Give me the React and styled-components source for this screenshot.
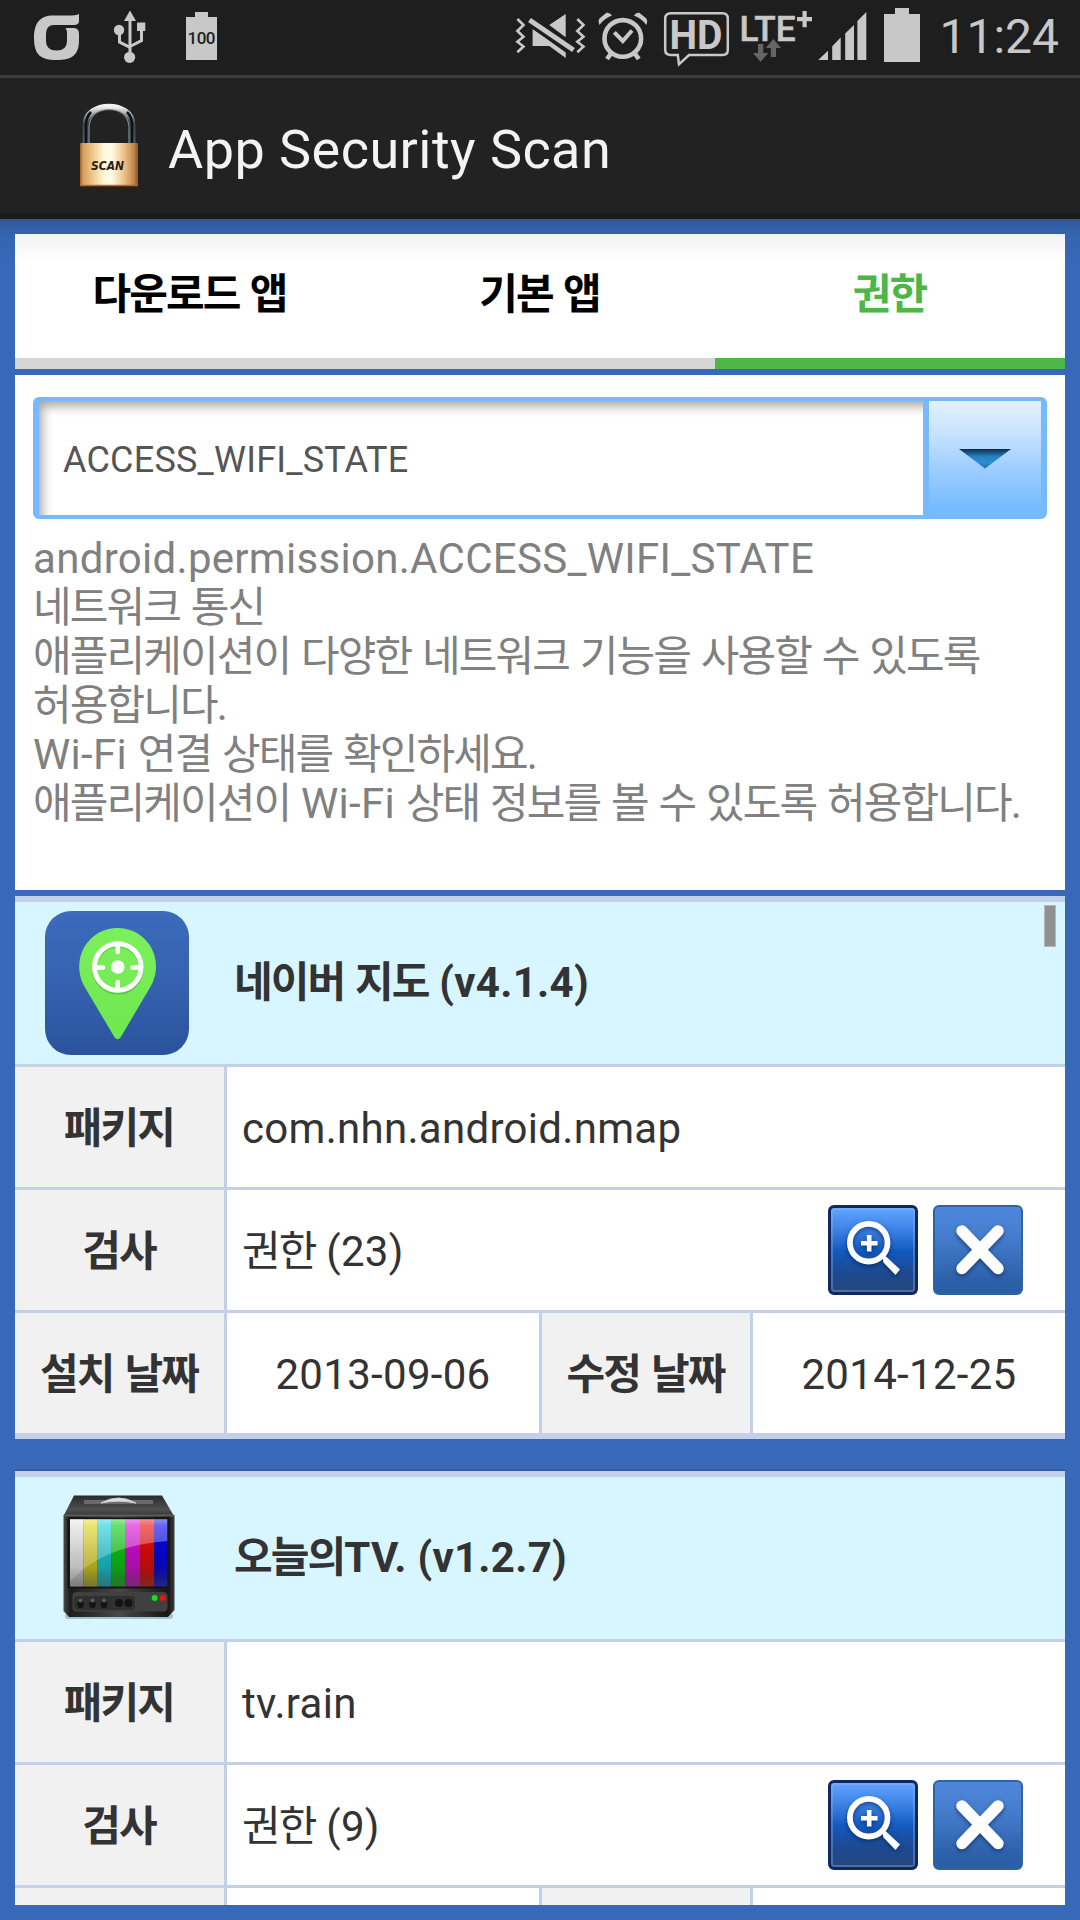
import React from "react";
import styled, { createGlobalStyle, css } from "styled-components";

const GlobalStyle = createGlobalStyle`
  * { box-sizing: border-box; }
  body { margin: 0; background: #3769b8; }
`;

const LATIN = `Roboto, "Noto Sans CJK KR", sans-serif`;
const HANGUL = `"Noto Sans CJK KR", Roboto, sans-serif`;
const ICON = "#c8c8c8";

const Screen = styled.div`
  width: 1080px;
  height: 1920px;
  overflow: hidden;
  display: flex;
  flex-direction: column;
  background: #3769b8;
  font-family: ${LATIN};
  font-size: 42px;
  line-height: 49px;
  letter-spacing: 0.3px;
  color: #333;
  white-space: nowrap;
`;

const Hangul = styled.span`
  font-family: ${HANGUL};
  letter-spacing: -0.045em;
  line-height: 0;
`;

/* Hangul runs get their own family and tracking; everything else stays in Roboto. */
function Label({ children }) {
  return (
    <span>
      {children
        .split(/([\uac00-\ud7a3]+)/)
        .filter(Boolean)
        .map((part, i) =>
          /[\uac00-\ud7a3]/.test(part) ? <Hangul key={i}>{part}</Hangul> : <React.Fragment key={i}>{part}</React.Fragment>
        )}
    </span>
  );
}

/* ---------- status bar ---------- */

const StatusBar = styled.header`
  flex: none;
  height: 78px;
  padding: 0 21px 0 30px;
  display: flex;
  background: #1e1e1e;
  border-bottom: 3px solid #3c3c3c;
  letter-spacing: 0;
`;

const StatusGlyph = styled.svg`
  flex: none;
  display: block;
  height: 75px;
  margin-left: ${(p) => p.$gap || 0}px;
  font-family: Roboto, sans-serif;
  font-weight: 700;
`;

const Clock = styled.time`
  margin-left: auto;
  font-size: 48px;
  line-height: 73px;
  color: ${ICON};
`;

function Glyph({ x, w, gap, children }) {
  return (
    <StatusGlyph $gap={gap} width={w} height="75" viewBox={`${x} 0 ${w} 75`} fill={ICON} stroke="none">
      {children}
    </StatusGlyph>
  );
}

function StatusIcons() {
  return (
    <>
      <Glyph x={30} w={52}>
        <path d="M79 14V21Q79 25 74 25H54Q46 25 46 34V41Q46 50.5 56.5 50.5T67 41V34Q67 30 65.5 28H74Q79 28 79 34V40C79 55 72 60 56.5 60S34 55 34 38C34 22 41 15.5 53 15.5H68Q76 15.5 79 14Z" />
      </Glyph>
      <Glyph x={110} w={40} gap={28}>
        <path d="M130 10.5L136 21H124Z" />
        <path d="M137 22.5h8.3v8.5h-8.3z" />
        <circle cx="119" cy="30" r="5.2" />
        <circle cx="129.6" cy="57.3" r="5.6" />
        <path d="M130 20V54M119.5 32V42L130 47.3M141.5 30V40.5L130 46.5" fill="none" stroke={ICON} strokeWidth="3" />
      </Glyph>
      <Glyph x={182} w={40} gap={32}>
        <path d="M186 17h9v-5h13v5h9v43h-31z" />
        <text x="187.5" y="44" fontSize="17" fontWeight="500" textLength="28" fill="#1e1e1e">100</text>
      </Glyph>
      <Glyph x={514} w={74} gap={292}>
        <path
          d="M517.4 19L523.5 25L517.4 31L523.5 36.7L517.4 41.7L523.5 46.5L517.4 52.3M577.3 19L583.5 25L577.3 31L583.5 36.7L577.3 41.7L583.5 46.5L577.3 52.3"
          fill="none"
          stroke={ICON}
          strokeWidth="2.6"
        />
        <path d="M549.2 25L565.7 14V37.3Z" />
        <path d="M532.6 29L565.7 51.5V58L549.2 46H532.6Z" />
        <path d="M527.500 22.500L571.500 54" fill="none" stroke="#1e1e1e" strokeWidth="4" />
        <path d="M529.5 20L573.5 50" fill="none" stroke={ICON} strokeWidth="5" />
      </Glyph>
      <Glyph x={596} w={54} gap={8}>
        <circle cx="622.8" cy="38.4" r="18.3" fill="none" stroke={ICON} strokeWidth="4.6" />
        <path d="M614.3 32.3L622.8 41L632 30.5" fill="none" stroke={ICON} strokeWidth="4" />
        <path d="M599.500 25Q597.500 20 600 18L606.500 12.800Q609.500 12 612 15.500Q604 18.500 599.500 25ZM646.300 25Q648.300 20 645.800 18L639.300 12.800Q636.300 12 633.800 15.500Q641.800 18.500 646.300 25Z" />
        <path d="M611 53.5L607 59M634.8 53.5L638.8 59" fill="none" stroke={ICON} strokeWidth="4.6" />
      </Glyph>
      <Glyph x={662} w={69} gap={12}>
        <path
          d="M671 13.2H722.5Q727.8 13.2 727.8 18.5V50Q727.8 55 722.5 55H689L679 64.3L677.8 55H671Q665.2 55 665.2 50V18.5Q665.2 13.2 671 13.2Z"
          fill="none"
          stroke={ICON}
          strokeWidth="2.5"
        />
        <text x="669.5" y="48.8" fontSize="40" textLength="53" lengthAdjust="spacingAndGlyphs">HD</text>
      </Glyph>
      <Glyph x={738} w={76} gap={7}>
        <text x="739.5" y="40.7" fontSize="34.5" fontWeight="500" textLength="56" lengthAdjust="spacingAndGlyphs" stroke={ICON} strokeWidth=".5">
          LTE
        </text>
        <path d="M802.5 11h4.2v6h5.3v4.2h-5.3v6h-4.2v-6h-5.5v-4.2h5.5z" />
        <path
          d="M758 44h5.3v9h4.9L760.6 62L753 53h5zM773.4 39l7.6 9h-5v9h-5.2v-9h-5z"
          fill="#656565"
          stroke="#1e1e1e"
          strokeWidth="1"
          paintOrder="stroke"
        />
      </Glyph>
      <Glyph x={816} w={52} gap={2}>
        <path d="M818.2 60L828 50.7V60ZM832.2 60V46.3L840.7 37.5V60ZM845.2 60V33.5L854 25V60ZM857.4 60V21L866.3 12V60Z" />
      </Glyph>
      <Glyph x={882} w={40} gap={14}>
        <path d="M884 14h11V8h14v6h11v48h-36z" />
      </Glyph>
    </>
  );
}

/* ---------- title bar ---------- */

const TitleBar = styled.div`
  flex: none;
  height: 141px;
  padding: 8px 0 0 69px;
  display: flex;
  align-items: center;
  gap: 18px;
  background: #222;
  border-bottom: 6px solid #1b1b1b;
`;

const AppTitle = styled.h1`
  margin: 0;
  font-size: 54px;
  font-weight: 400;
  line-height: 64px;
  letter-spacing: 0.45px;
  color: #f3f3f3;
`;

const Padlock = styled.svg`
  display: block;
  flex: none;
  margin-top: -10px;
`;

function PadlockIcon() {
  return (
    <Padlock width="81" height="96" viewBox="69 97 81 96">
      <defs>
        <linearGradient id="brass">
          <stop offset="0" stopColor="#a3672f" />
          <stop offset=".06" stopColor="#d8a062" />
          <stop offset=".25" stopColor="#f3cf96" />
          <stop offset=".42" stopColor="#fff8dc" />
          <stop offset=".55" stopColor="#fffbe6" />
          <stop offset=".75" stopColor="#efc58a" />
          <stop offset=".92" stopColor="#c58a4d" />
          <stop offset="1" stopColor="#8d5526" />
        </linearGradient>
        <linearGradient id="steel" x1="0" y1="0" x2="0" y2="1">
          <stop offset="0" stopColor="#f2f2f2" />
          <stop offset=".2" stopColor="#a0a4a7" />
          <stop offset=".45" stopColor="#3c4145" />
          <stop offset="1" stopColor="#50585f" />
        </linearGradient>
      </defs>
      <ellipse cx="109" cy="187" rx="38" ry="3" fill="#2c1f1a" />
      <path d="M85.500 144V125C85.500 100.500 132.500 100.500 132.500 125V144" fill="none" stroke="url(#steel)" strokeWidth="6" />
      <path d="M86 144V125Q86 117 91 112M132 144V125Q132 117 127 112" fill="none" stroke="#0c1117" strokeWidth="2.500" />
      <path d="M89 144V126Q91 110 109 109.500Q127 110 129 126V144" fill="none" stroke="#7f8b95" strokeWidth="1.200" />
      <rect x="80" y="143" width="58" height="43" rx="1" fill="url(#brass)" />
      <path d="M80 185.500H138" stroke="#a86f35" strokeWidth="1.500" />
      <text
        x="91"
        y="169.700"
        fontFamily="DejaVu Sans, sans-serif"
        fontSize="12"
        fontWeight="700"
        fontStyle="italic"
        textLength="33"
        lengthAdjust="spacingAndGlyphs"
        letterSpacing="0"
        fill="#2b1d10"
      >
        SCAN
      </text>
    </Padlock>
  );
}

/* ---------- content ---------- */

const Content = styled.main`
  position: relative;
  flex: 1;
  min-height: 0;
  padding: 15px;
  display: flex;
  flex-direction: column;
  gap: 6px;

  &::before {
    content: "";
    position: absolute;
    z-index: 1;
    top: 0;
    left: 0;
    right: 0;
    height: 42px;
    background: linear-gradient(rgba(0, 0, 0, 0.16), rgba(0, 0, 0, 0.05) 36%, rgba(0, 0, 0, 0));
    pointer-events: none;
  }
`;

const Tabs = styled.nav`
  flex: none;
  height: 135px;
  display: grid;
  grid-template-columns: repeat(3, 1fr);
  background: #fff;
`;

const Tab = styled.button`
  padding: 0 1px 3px 0;
  border: 0;
  border-bottom: 11px solid ${(p) => (p.$active ? "#4cb748" : "#d6d6d6")};
  background: none;
  font: 700 42px/49px ${LATIN};
  color: ${(p) => (p.$active ? "#4cb748" : "#000")};
`;

const PermissionPanel = styled.section`
  flex: none;
  height: 515px;
  padding: 22px 18px 0;
  background: #fff;
`;

const Select = styled.div`
  height: 122px;
  display: flex;
  border: 4px solid #75baff;
  border-width: 4px 6px 4px 6px;
  border-radius: 6px;
`;

const SelectValue = styled.div`
  flex: 1;
  padding: 4px 0 0 24px;
  display: flex;
  align-items: center;
  font-size: 36px;
  letter-spacing: 0.2px;
  color: #555;
  box-shadow: inset 7px 9px 11px -4px rgba(0, 0, 0, 0.36);
`;

const SelectArrow = styled.div`
  width: 118px;
  display: flex;
  align-items: center;
  justify-content: center;
  padding-top: 2px;
  border-left: 6px solid #75baff;
  background: linear-gradient(#e3f1ff, #c8e3fd 28%, #9dcdff 60%, #75baff 95%);
`;

const Description = styled.p`
  margin: 15px 0 0;
  color: #808080;
`;

const AppList = styled.section`
  position: relative;
  flex: 1;
  min-height: 0;
  overflow: hidden;
`;

const ScrollThumb = styled.div`
  position: absolute;
  top: 9px;
  right: 9px;
  width: 12px;
  height: 42px;
  background: #909090;
  border: 1px solid #b0b8ba;
`;

const Card = styled.article`
  height: 543px;
  margin-bottom: 32px;
  border: solid #c4d0e8;
  border-width: 6px 0;
  background: #fff;
  box-shadow: 0 -2px 0 ${(p) => (p.$edge ? "#305ca3" : "transparent")};
`;

const CardHeader = styled.div`
  height: 162px;
  padding-left: 30px;
  display: flex;
  align-items: center;
  gap: 45px;
  background: #d8f6ff;
`;

const AppName = styled.h2`
  margin: -2px 0 0;
  font-size: 42px;
  line-height: 49px;
  font-weight: 700;
`;

const Row = styled.div`
  height: 123px;
  display: grid;
  grid-template-columns: ${(p) => (p.$dates ? "209px 315px 211px 1fr" : "209px 1fr")};
  border-top: 3px solid #c4d0e8;
`;

const cell = css`
  display: flex;
  align-items: center;
  padding-top: 3px;
`;

const Term = styled.div`
  ${cell}
  justify-content: center;
  padding: 2px 1px 0 0;
  background: #f1f1f1;
  font-weight: 700;
  ${(p) => p.$divided && "border-left: 3px solid #c4d0e8;"}
`;

const Value = styled.div`
  ${cell}
  padding-left: ${(p) => (p.$centered ? 0 : 15)}px;
  justify-content: ${(p) => (p.$centered ? "center" : "space-between")};
  border-left: 3px solid #c4d0e8;
`;

const Actions = styled.div`
  display: flex;
  gap: 15px;
  margin: -3px 42px 0 0;
`;

const ActionButton = styled.button`
  width: 90px;
  height: 90px;
  padding: 0;
  border: ${(p) => (p.$primary ? "3px solid #10285f" : "2px solid #2f64a3")};
  border-radius: 6px;
  background: ${(p) =>
    p.$primary
      ? "linear-gradient(#62a3ff, #4188ea 22%, #1259bd 52%, #1c4b93 75%, #27457a)"
      : "linear-gradient(#4e86dc, #477fd0 30%, #2a5ea6 90%)"};
  box-shadow: ${(p) => (p.$primary ? "inset 0 0 0 2px rgba(150, 185, 235, 0.35)" : "none")};

  svg {
    display: block;
    margin: ${(p) => (p.$primary ? -3 : -2)}px;
    filter: drop-shadow(0 2px 2px rgba(0, 20, 70, 0.55));
  }
`;

function ZoomIcon() {
  return (
    <svg width="90" height="90" viewBox="0 0 90 90" fill="none" stroke="#fff">
      <circle cx="40.700" cy="37.700" r="18.800" strokeWidth="5.800" />
      <path d="M33 38.200H49.600M41.200 29.900V46.500" strokeWidth="4.600" />
      <path d="M54.500 53L57.500 51L72 64.500L67.500 70L55.500 57.500Z" fill="#fff" stroke="none" />
    </svg>
  );
}

function CloseIcon() {
  return (
    <svg width="90" height="90" viewBox="0 0 90 90" fill="none" stroke="#fff" strokeWidth="11.500" strokeLinecap="round">
      <path d="M29 26L65 63.500M65 26L29 63.500" />
    </svg>
  );
}

function MapIcon() {
  return (
    <svg width="144" height="144" viewBox="0 0 144 144">
      <defs>
        <linearGradient id="mapBg" x1="0" y1="0" x2="0" y2="1">
          <stop offset="0" stopColor="#3b6bba" />
          <stop offset=".5" stopColor="#3561b0" />
          <stop offset="1" stopColor="#2a539b" />
        </linearGradient>
        <linearGradient id="pin" x1="0" y1="0" x2="0" y2="1">
          <stop offset="0" stopColor="#7bf05c" />
          <stop offset="1" stopColor="#6fe74f" />
        </linearGradient>
      </defs>
      <rect width="144" height="144" rx="26" fill="url(#mapBg)" />
      <path
        d="M72.600 17C94 17 111 34 111 55.500C111 64 108.500 70.500 105 76.500L75.500 126.500Q72.600 130 69.700 126.500L40 76.500C36.500 70.500 34.200 64 34.200 55.500C34.200 34 51.200 17 72.600 17Z"
        fill="url(#pin)"
      />
      <circle cx="72.800" cy="57.500" r="23.500" fill="none" stroke="#5cc845" strokeWidth="5" />
      <g fill="none" stroke="#fff">
        <circle cx="72.800" cy="56" r="23.300" strokeWidth="5" />
        <path d="M72.800 34V41M72.800 71V79M50 56.500H58M87.500 56.500H96" strokeWidth="4.500" strokeLinecap="round" />
      </g>
      <circle cx="72.800" cy="56" r="6.800" fill="#fff" />
    </svg>
  );
}

const BARS = [
  ["#e8e8e8", 25.0],
  ["#e6dc1e", 38.3],
  ["#1cd6e0", 52.7],
  ["#0ed418", 66.7],
  ["#e20ee2", 80.7],
  ["#f20c0c", 95.0],
  ["#0606f0", 109.3],
];

function TvIcon() {
  return (
    <svg width="144" height="144" viewBox="0 0 144 144">
      <defs>
        <linearGradient id="tvTop" x1="0" y1="0" x2="0" y2="1">
          <stop offset="0" stopColor="#2a2a2a" />
          <stop offset=".7" stopColor="#505050" />
          <stop offset="1" stopColor="#333" />
        </linearGradient>
        <linearGradient id="tvBody">
          <stop offset="0" stopColor="#4a4a4a" />
          <stop offset=".06" stopColor="#1c1c1c" />
          <stop offset=".5" stopColor="#484848" />
          <stop offset=".94" stopColor="#161612" />
          <stop offset="1" stopColor="#3c3c3a" />
        </linearGradient>
        <linearGradient id="tvShade" x1="0" y1="0" x2="0" y2="1">
          <stop offset="0" stopColor="#000" stopOpacity="0" />
          <stop offset=".5" stopColor="#000" stopOpacity=".2" />
          <stop offset=".72" stopColor="#111" stopOpacity=".28" />
          <stop offset="1" stopColor="#3a3a3a" stopOpacity=".62" />
        </linearGradient>
        <linearGradient id="tvGlare" x1="0" y1="0" x2="0" y2="1">
          <stop offset="0" stopColor="#fff" stopOpacity=".55" />
          <stop offset=".1" stopColor="#fff" stopOpacity=".38" />
          <stop offset="1" stopColor="#fff" stopOpacity=".14" />
        </linearGradient>
      </defs>
      <rect x="20" y="127" width="108" height="6" rx="3" fill="#8fb0ba" opacity=".7" />
      <path d="M29 9.500H117L129 30H18.500Z" fill="url(#tvTop)" />
      <path d="M39 14H108V18H39Z" fill="#6a6a6a" />
      <path d="M56 17Q73.500 7 91 17Q73.500 13.500 56 17Z" fill="#ddd" stroke="#ccc" strokeWidth="1" />
      <path d="M18.500 29H129.500V124L123 131H24L18.500 125Z" fill="url(#tvBody)" />
      <path d="M19.500 29.500H128.500" stroke="#5c5c5c" strokeWidth="2" />
      <rect x="22.500" y="31.500" width="102" height="71" fill="#151515" />
      {BARS.map(([fill, x], i) => (
        <rect key={fill} x={x} y="33.300" width={(BARS[i + 1] ? BARS[i + 1][1] : 122.3) - x} height="67" fill={fill} />
      ))}
      <rect x="25" y="33.300" width="97.300" height="67" fill="url(#tvShade)" />
      <path d="M25 33.300H122.300V55C85 58 50 68 25 96Z" fill="url(#tvGlare)" />
      <rect x="27.500" y="106" width="95" height="19.500" rx="4" fill="#404040" />
      <rect x="29" y="110" width="61" height="14" rx="3" fill="#303030" />
      <g fill="#141414">
        <circle cx="35.500" cy="118.500" r="3.400" />
        <circle cx="47.500" cy="118.500" r="3.400" />
        <circle cx="59" cy="118.500" r="3.400" />
        <circle cx="74" cy="117" r="4" />
        <circle cx="83.500" cy="117" r="4" />
      </g>
      <g fill="#5c5c5c">
        <circle cx="35.500" cy="114.500" r="2" />
        <circle cx="47.500" cy="114.500" r="2" />
        <circle cx="59" cy="114.500" r="2" />
      </g>
      <circle cx="109.700" cy="112" r="3" fill="#0be51c" />
      <circle cx="117.700" cy="112" r="3" fill="#f01212" />
    </svg>
  );
}

const APPS = [
  {
    name: "네이버 지도 (v4.1.4)",
    icon: <MapIcon />,
    pkg: "com.nhn.android.nmap",
    permissions: "권한 (23)",
    installed: "2013-09-06",
    updated: "2014-12-25",
  },
  { name: "오늘의TV. (v1.2.7)", icon: <TvIcon />, pkg: "tv.rain", permissions: "권한 (9)", edge: true },
];

function AppCard({ app }) {
  return (
    <Card $edge={app.edge}>
      <CardHeader>
        {app.icon}
        <AppName>
          <Label>{app.name}</Label>
        </AppName>
      </CardHeader>
      <Row>
        <Term>
          <Label>패키지</Label>
        </Term>
        <Value>{app.pkg}</Value>
      </Row>
      <Row>
        <Term>
          <Label>검사</Label>
        </Term>
        <Value>
          <Label>{app.permissions}</Label>
          <Actions>
            <ActionButton $primary>
              <ZoomIcon />
            </ActionButton>
            <ActionButton>
              <CloseIcon />
            </ActionButton>
          </Actions>
        </Value>
      </Row>
      <Row $dates>
        <Term>{app.installed && <Label>설치 날짜</Label>}</Term>
        <Value $centered>{app.installed}</Value>
        <Term $divided>{app.updated && <Label>수정 날짜</Label>}</Term>
        <Value $centered>{app.updated}</Value>
      </Row>
    </Card>
  );
}

const DESCRIPTION = [
  "android.permission.ACCESS_WIFI_STATE",
  "네트워크 통신",
  "애플리케이션이 다양한 네트워크 기능을 사용할 수 있도록",
  "허용합니다.",
  "Wi-Fi 연결 상태를 확인하세요.",
  "애플리케이션이 Wi-Fi 상태 정보를 볼 수 있도록 허용합니다.",
];

export default function App() {
  return (
    <>
      <GlobalStyle />
      <Screen>
        <StatusBar>
          <StatusIcons />
          <Clock>11:24</Clock>
        </StatusBar>
        <TitleBar>
          <PadlockIcon />
          <AppTitle>App Security Scan</AppTitle>
        </TitleBar>
        <Content>
          <Tabs>
            <Tab><Label>다운로드 앱</Label></Tab>
            <Tab><Label>기본 앱</Label></Tab>
            <Tab $active><Label>권한</Label></Tab>
          </Tabs>
          <PermissionPanel>
            <Select>
              <SelectValue>ACCESS_WIFI_STATE</SelectValue>
              <SelectArrow>
                <svg width="52" height="20" viewBox="0 0 52 20">
                  <defs>
                    <linearGradient id="arrow" x1="0" y1="0" x2="0" y2="1">
                      <stop offset="0" stopColor="#0c2c47" />
                      <stop offset=".38" stopColor="#2380bd" />
                      <stop offset=".7" stopColor="#2b8fd3" />
                      <stop offset="1" stopColor="#1f6a9e" />
                    </linearGradient>
                  </defs>
                  <path d="M0 0H52L26 19.500Z" fill="url(#arrow)" />
                </svg>
              </SelectArrow>
            </Select>
            <Description>
              {DESCRIPTION.map((line) => (
                <React.Fragment key={line}>
                  <Label>{line}</Label>
                  <br />
                </React.Fragment>
              ))}
            </Description>
          </PermissionPanel>
          <AppList>
            {APPS.map((app) => (
              <AppCard key={app.name} app={app} />
            ))}
            <ScrollThumb />
          </AppList>
        </Content>
      </Screen>
    </>
  );
}
